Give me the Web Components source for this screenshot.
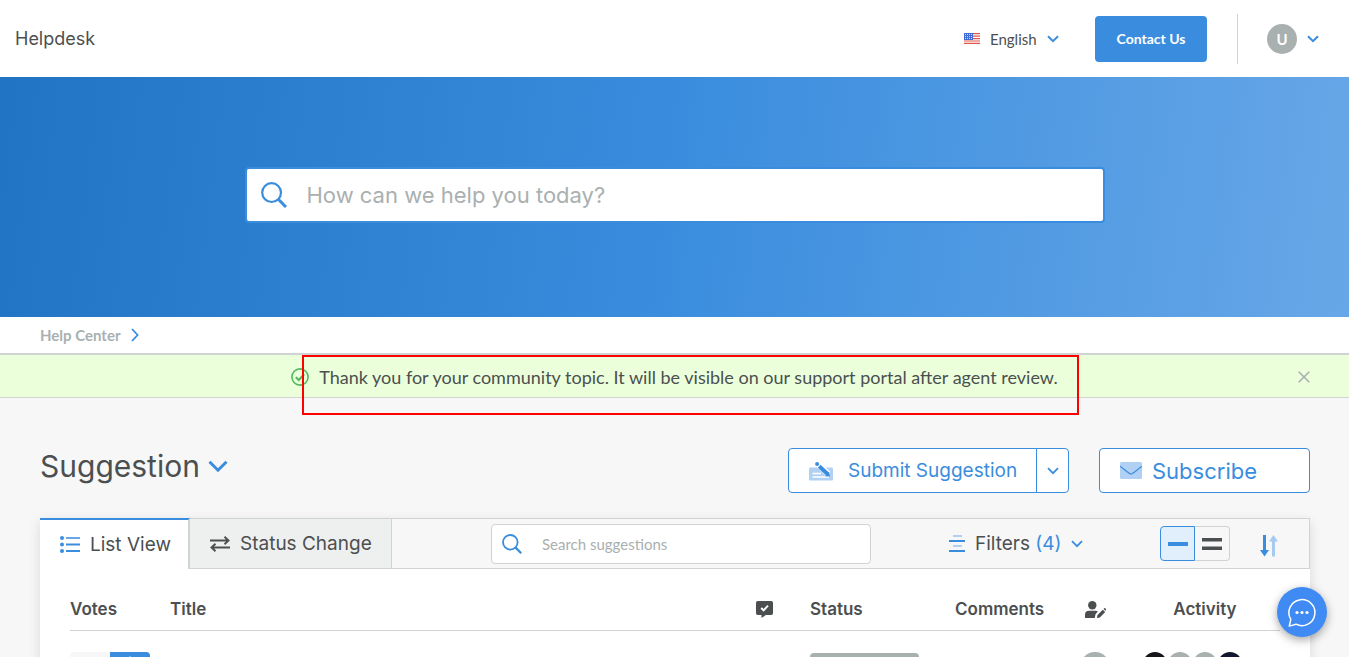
<!DOCTYPE html>
<html lang="en">
<head>
<meta charset="utf-8">
<meta name="viewport" content="width=device-width, initial-scale=1">
<title>Helpdesk - Suggestion</title>
<style>
  :root {
    --blue: #3a8dde;
    --ink: #4c4f50;
    --muted: #a9b0b0;
    --line: #d0d3d3;
    --canvas: #f7f7f7;
    --display: Inter, Roboto, sans-serif;
    --text: Lato, "Open Sans", sans-serif;
  }
  html { height: 100%; overflow: hidden; }
  body { margin: 0; height: 100%; overflow: hidden; background: var(--canvas); color: var(--ink); font: 15px/20px var(--text); }
</style>
</head>
<body>
<hd-header></hd-header>
<hd-hero></hd-hero>
<hd-breadcrumb><a href="#">Help Center</a></hd-breadcrumb>
<hd-notice>Thank you for your community topic. It will be visible on our support portal after agent review.</hd-notice>
<hd-community>
  <hd-title-bar slot="title">Suggestion</hd-title-bar>
  <hd-toolbar slot="toolbar"></hd-toolbar>
  <hd-topics></hd-topics>
</hd-community>
<hd-chat></hd-chat>

<script>
const define = (name, html) => {
  const template = document.createElement('template');
  template.innerHTML = html;
  customElements.define(name, class extends HTMLElement {
    constructor() {
      super();
      this.attachShadow({ mode: 'open' }).append(template.content.cloneNode(true));
    }
  });
};

const reset = `
  * { box-sizing: border-box; }
  button, input, select { font: inherit; color: inherit; margin: 0; padding: 0; border: 0; background: none; }
  button, select { cursor: pointer; }
  input { outline: none; }
  a { color: inherit; text-decoration: none; }
`;

/* name: [width, height, markup] */
const icons = {
  down: [12, 8, '<path d="M1 1.2 6 6.2 11 1.2" fill="none" stroke="currentColor" stroke-width="2"/>'],
  downSmall: [12, 8, '<path d="M1 1.2 6 6.2 11 1.2" fill="none" stroke="currentColor" stroke-width="1.8"/>'],
  downBig: [20, 13, '<path d="M1.5 1.8 10 10.2 18.5 1.8" fill="none" stroke="currentColor" stroke-width="3"/>'],
  right: [8, 14, '<path d="M1 1 6.6 7 1 13" fill="none" stroke="currentColor" stroke-width="1.8"/>'],
  close: [12, 12, '<path d="M.7.7l10.6 10.6M11.3.7.7 11.3" stroke="currentColor" stroke-width="1.6"/>'],
  search: [26, 26, '<g fill="none" stroke="currentColor"><circle cx="10.6" cy="10.6" r="9.4" stroke-width="2.2"/><path d="M17.3 17.3 25 25" stroke-width="3"/></g>'],
  searchSmall: [20, 20, '<g fill="none" stroke="currentColor"><circle cx="8.3" cy="8.3" r="7.3" stroke-width="1.8"/><path d="M13.4 13.4 19.2 19.2" stroke-width="2.2"/></g>'],
  check: [18, 18, '<g fill="none" stroke="currentColor" stroke-width="1.6"><circle cx="9" cy="9" r="8.1"/><path d="M4.8 9.2 7.8 12 13.2 6.3" stroke-width="2"/></g>'],
  flag: [16, 11, '<path fill="#fff" d="M0 0h16v11H0z"/><path fill="#e0564a" d="M0 0h16v1.3H0zM0 2.5h16v1.3H0zM0 5h16v1.2H0zM0 7.4h16v1.2H0zM0 9.8h16V11H0z"/><path fill="#4069d8" d="M0 0h9v7H0z"/><path d="M1 1.5h7M1 3.5h7M1 5.5h7" stroke="#fff" stroke-width=".8" stroke-dasharray="1 1"/>'],
  submit: [24, 20, '<rect y="6.5" width="24" height="13" rx="1" fill="#b0d1f3"/><path d="M3.5 12.5h8.5M3.5 16h16.5" stroke="#fff" stroke-width="1.3"/><path d="M8 2.2 19.2 13" stroke="#fff" stroke-width="6"/><path d="M10.2 5.2 18.8 13.2" stroke="#3a8dde" stroke-width="4"/><path d="m16 15.2 5 .2-1.3-4.6z" fill="#3a8dde"/><circle cx="8.1" cy="3" r="2" fill="#3a8dde"/>'],
  mail: [22, 17, '<rect width="22" height="17" rx="1.6" fill="#b0d1f3"/><path d="M.2 4.3C5 8 8 10.400 9.600 11.500q1.400.9 2.800 0C14 10.400 17 8 21.800 4.300" fill="none" stroke="#3a8dde" stroke-width="1.2"/>'],
  list: [20, 17, '<g fill="#3a8dde"><circle cx="2" cy="2" r="2"/><circle cx="2" cy="8.500" r="2"/><circle cx="2" cy="15" r="2"/><path d="M6 7.500h14v2H6zM6 14h14v2H6z"/></g><path d="M6 1h14v2H6z" fill="#67a7e7"/>'],
  swap: [20, 16, '<path d="M0 4.500h18M14.500.8l4 3.700-4 3.700M20 11.500H2M5.500 7.800l-4 3.700 4 3.700" fill="none" stroke="currentColor" stroke-width="1.900"/>'],
  filter: [16, 17, '<path d="M4 0h9v2H4zM4 10h9v2H4z" fill="#b0d1f3"/><path d="M0 5h16v2H0zM0 15h16v2H0z" fill="#3a8dde"/>'],
  one: [20, 4, '<path d="M0 0h20v4H0z" fill="currentColor"/>'],
  two: [20, 12, '<path d="M0 0h20v3.500H0zM0 8.500h20V12H0z" fill="currentColor"/>'],
  sort: [18, 22, '<path d="M3 0h3v15h3l-4.500 6.500L0 15h3z" fill="#3a8dde"/><path d="M12 21.500h3V6.500h3L13.500 0 9 6.500h3z" fill="#a6cbf1"/>'],
  vote: [17, 17, '<path d="M1.800 0h13.400Q17 0 17 1.800v10.400q0 1.800-1.800 1.800H9.800L5.500 17v-3H1.800Q0 14 0 12.200V1.800Q0 0 1.800 0z" fill="currentColor"/><path d="m5.200 7 2.400 2.300 4.400-4.600" fill="none" stroke="#fff" stroke-width="1.900"/>'],
  author: [21, 17, '<g fill="currentColor"><circle cx="7.300" cy="4.200" r="4.200"/><path d="M0 17v-3.200Q0 9.800 4 9.800h6.600q1.400 0 2.300.6L10.500 13.200 9.800 17z"/><path d="m11.800 17 .7-3L17.800 8.700l2.400 2.400-5.300 5.300zM18.500 8l.8-.8q.6-.4 1.200.2l.5.600q.4.600 0 1l-.7.700z"/></g>'],
  up: [12, 8, '<path d="M6 0 12 8H0z" fill="#fff"/>'],
  chat: [28, 29, '<path d="M3.300 27.600 1.300 28l1.500-6.600A13 13 0 1 1 8 26.200z" fill="none" stroke="#fff" stroke-width="1.500" stroke-linejoin="round"/><g fill="#fff"><circle cx="9" cy="14.500" r="1.600"/><circle cx="14" cy="14.500" r="1.600"/><circle cx="19" cy="14.500" r="1.600"/></g>']
};

customElements.define('hd-icon', class extends HTMLElement {
  constructor() { super(); this.attachShadow({ mode: 'open' }); }
  connectedCallback() {
    const [w, h, body] = icons[this.getAttribute('name')];
    this.shadowRoot.innerHTML = `<style>:host{display:block;flex:none}svg{display:block}</style>
      <svg width="${w}" height="${h}" viewBox="0 0 ${w} ${h}" aria-hidden="true">${body}</svg>`;
  }
});

define('hd-header', `<style>${reset}
  :host { display: block; background: #fff; }
  header { display: flex; align-items: center; height: 77px; padding: 0 30px 0 15px; }
  .brand { margin-right: auto; font: 18px/24px var(--display); }
  .lang { display: flex; align-items: center; margin-right: 36px; }
  .lang label { margin-right: 10px; }
  .lang select { appearance: none; width: 57px; height: 30px; }
  hd-icon { color: var(--blue); }
  .contact { width: 112px; height: 46px; border-radius: 4px; background: var(--blue); color: #fff; font-weight: 700; font-size: 14px; }
  .user { display: flex; align-items: center; gap: 10px; height: 50px; margin-left: 30px; padding-left: 29px; border-left: 1px solid var(--line); }
  .avatar { width: 30px; height: 30px; border-radius: 50%; background: var(--muted); color: #fff; font-weight: 700; line-height: 30px; text-align: center; }
</style>
<header>
  <a class="brand" href="#">Helpdesk</a>
  <div class="lang">
    <label for="lang" aria-label="Language"><hd-icon name="flag"></hd-icon></label>
    <select id="lang"><option>English</option></select>
    <hd-icon name="down"></hd-icon>
  </div>
  <button class="contact">Contact Us</button>
  <button class="user" aria-label="Account"><span class="avatar">U</span><hd-icon name="down"></hd-icon></button>
</header>`);

define('hd-hero', `<style>${reset}
  :host { display: block; background: linear-gradient(97deg, #2173c3 0%, #3a8dde 50%, #67a7e7 100%); }
  form { display: flex; align-items: center; justify-content: center; height: 240px; padding: 0 40px 4px; }
  .box { display: flex; align-items: center; gap: 20px; flex: 0 1 860px; height: 56px; padding-left: 14px; border: 2px solid var(--blue); border-radius: 4px; background: #fff; }
  hd-icon { color: var(--blue); }
  input { flex: 1; min-width: 0; height: 100%; font: 22px/28px var(--display); }
  input::placeholder { color: var(--muted); opacity: 1; }
</style>
<form role="search"><div class="box"><hd-icon name="search"></hd-icon><input type="text" aria-label="Search the help center" placeholder="How can we help you today?"></div></form>`);

define('hd-breadcrumb', `<style>
  :host { display: block; background: #fff; border-bottom: 2px solid var(--line); }
  nav { display: flex; align-items: center; gap: 11px; height: 36px; padding: 0 40px; color: var(--muted); font-weight: 700; }
  ::slotted(a) { color: inherit; text-decoration: none; }
  hd-icon { color: var(--blue); }
</style>
<nav aria-label="Breadcrumb"><slot></slot><hd-icon name="right"></hd-icon></nav>`);

define('hd-notice', `<style>${reset}
  :host { display: block; position: relative; background: #ebffdb; border-bottom: 1px solid var(--line); }
  .bar { display: flex; align-items: center; height: 42px; padding: 2px 39px 0; }
  p { display: flex; align-items: center; justify-content: center; gap: 10px; flex: 1; margin: 0; font-size: 18px; line-height: 24px; }
  p hd-icon { color: #52b85f; }
  button { width: 12px; margin-left: -12px; color: #a9b0b0; }
  .mark { position: absolute; top: 0; left: calc(50% - 373px); width: 777px; height: 60px; border: 2px solid #f00; pointer-events: none; }
</style>
<div class="bar" role="status"><p><hd-icon name="check"></hd-icon><span><slot></slot></span></p>
<button aria-label="Dismiss"><hd-icon name="close"></hd-icon></button></div>
<div class="mark"></div>`);

define('hd-community', `<style>
  :host { display: block; padding: 50px 39px 0 40px; }
  .panel { margin-top: 25px; background: #fff; box-shadow: 0 4px 12px rgba(0, 0, 0, .12); }
</style>
<main><slot name="title"></slot><section class="panel"><slot name="toolbar"></slot><slot></slot></section></main>`);

define('hd-title-bar', `<style>${reset}
  :host { display: flex; align-items: center; gap: 30px; color: var(--blue); font-family: var(--display); }
  h1 { margin: 0 auto 8px 0; font-size: 30px; line-height: 35px; font-weight: 400; }
  h1 button { display: flex; align-items: center; gap: 8px; }
  h1 span { color: var(--ink); }
  .split { display: flex; height: 45px; }
  .split button, .subscribe { display: flex; align-items: center; height: 45px; border: 1px solid var(--blue); background: #fff; }
  .submit { gap: 15px; width: 249px; padding-left: 20px; border-radius: 4px 0 0 4px; font-size: 19px; }
  .more { justify-content: center; width: 33px; margin-left: -1px; border-radius: 0 4px 4px 0; }
  .subscribe { gap: 10px; width: 211px; padding-left: 20px; border-radius: 4px; font-size: 22px; }
</style>
<h1><button aria-haspopup="true"><span><slot></slot></span><hd-icon name="downBig"></hd-icon></button></h1>
<div class="split"><button class="submit"><hd-icon name="submit"></hd-icon>Submit Suggestion</button><button class="more" aria-label="More options"><hd-icon name="downSmall"></hd-icon></button></div>
<button class="subscribe"><hd-icon name="mail"></hd-icon>Subscribe</button>`);

define('hd-toolbar', `<style>${reset}
  :host { display: flex; box-sizing: border-box; align-items: center; gap: 78px; height: 51px; padding-right: 31px; border: 1px solid var(--line); border-left: 0; background: var(--canvas); font: 19px/24px var(--display); }
  .tabs { display: flex; align-self: stretch; margin: -1px auto -1px 0; }
  .tab { display: flex; align-items: center; gap: 10px; padding: 0 20px; border: solid var(--line); border-width: 1px 1px 1px 0; background: #eef0ef; white-space: nowrap; }
  .tab.on { width: 150px; border-top: 2px solid var(--blue); border-right-width: 2px; border-bottom: 0; background: #fff; }
  .status { width: 202px; }
  .search { display: flex; align-items: center; gap: 20px; flex: 0 1 380px; height: 40px; padding-left: 10px; border: 1px solid var(--line); border-radius: 4px; background: #fff; color: var(--blue); }
  .search input { flex: 1; min-width: 0; height: 100%; color: var(--ink); font: 15px/20px var(--text); }
  .search input::placeholder { color: var(--muted); opacity: 1; }
  .filters { display: flex; align-items: center; gap: 10px; width: 133px; white-space: nowrap; }
  .filters b, .filters hd-icon { color: var(--blue); font-weight: 400; }
  .end { display: flex; align-items: center; gap: 30px; }
  .views { display: flex; }
  .views button { display: grid; place-items: center; width: 35px; height: 35px; border: 1px solid var(--line); border-left: 0; border-radius: 0 4px 4px 0; }
  .views .on { border: 1px solid var(--blue); border-radius: 4px 0 0 4px; background: #e1eefb; color: var(--blue); }
  .sort { padding-top: 4px; }
</style>
<div class="tabs" role="tablist">
  <button class="tab on" role="tab" aria-selected="true"><hd-icon name="list"></hd-icon>List View</button>
  <button class="tab status" role="tab" aria-selected="false"><hd-icon name="swap"></hd-icon>Status Change</button>
</div>
<div class="search"><hd-icon name="searchSmall"></hd-icon><input type="text" aria-label="Search suggestions" placeholder="Search suggestions"></div>
<button class="filters"><hd-icon name="filter"></hd-icon><span>Filters <b>(4)</b></span><hd-icon name="downSmall"></hd-icon></button>
<div class="end">
  <div class="views"><button class="on" aria-label="Compact view"><hd-icon name="one"></hd-icon></button><button aria-label="Expanded view"><hd-icon name="two"></hd-icon></button></div>
  <button class="sort" aria-label="Sort"><hd-icon name="sort"></hd-icon></button>
</div>`);

define('hd-topics', `<style>${reset}
  :host { display: block; padding: 20px 30px 30px; }
  table { width: 100%; border-collapse: collapse; table-layout: fixed; }
  th { height: 41px; padding: 0; border-bottom: 1px solid var(--line); text-align: left; font: 600 17px/20px var(--display); }
  td { padding: 21px 0; vertical-align: top; }
  .votes { width: 100px; } .kind { width: 54px; } .state { width: 145px; } .comments { width: 105px; } .author { width: 70px; } .activity { width: 150px; }
  th.author hd-icon { width: 21px; margin: 0 auto; }
  th.activity { text-align: center; }
  .vote { display: flex; width: 80px; height: 30px; border-radius: 4px; overflow: hidden; background: var(--canvas); }
  .vote button { display: grid; place-items: start center; width: 40px; height: 30px; margin-left: auto; padding-top: 4px; background: var(--blue); }
  .pill { width: 109px; height: 28px; margin-top: 1px; border-radius: 4px; background: var(--muted); }
  .face { width: 30px; height: 30px; margin: 0 auto; border-radius: 50%; background: var(--muted); }
  .faces { display: flex; gap: 1px; padding-left: 13px; }
  .faces i { width: 24px; height: 24px; border-radius: 50%; background: var(--muted); }
  .faces .black { background: #15151a; } .faces .navy { background: #12162e; }
</style>
<table>
  <thead><tr>
    <th class="votes">Votes</th><th>Title</th>
    <th class="kind" aria-label="Type"><hd-icon name="vote"></hd-icon></th>
    <th class="state">Status</th><th class="comments">Comments</th>
    <th class="author" aria-label="Author"><hd-icon name="author"></hd-icon></th>
    <th class="activity">Activity</th>
  </tr></thead>
  <tbody><tr>
    <td><div class="vote"><button aria-label="Vote up"><hd-icon name="up"></hd-icon></button></div></td>
    <td></td><td></td>
    <td><div class="pill"></div></td><td></td>
    <td><div class="face"></div></td>
    <td><div class="faces"><i class="black"></i><i></i><i></i><i class="navy"></i></div></td>
  </tr></tbody>
</table>`);

define('hd-chat', `<style>${reset}
  :host { display: block; position: fixed; right: 22px; bottom: 20px; }
  button { display: grid; place-items: center; width: 50px; height: 50px; border-radius: 50%; background: #3f8af3; box-shadow: 0 3px 10px rgba(0, 0, 0, .35); }
</style>
<button aria-label="Open chat"><hd-icon name="chat"></hd-icon></button>`);
</script>
</body>
</html>
